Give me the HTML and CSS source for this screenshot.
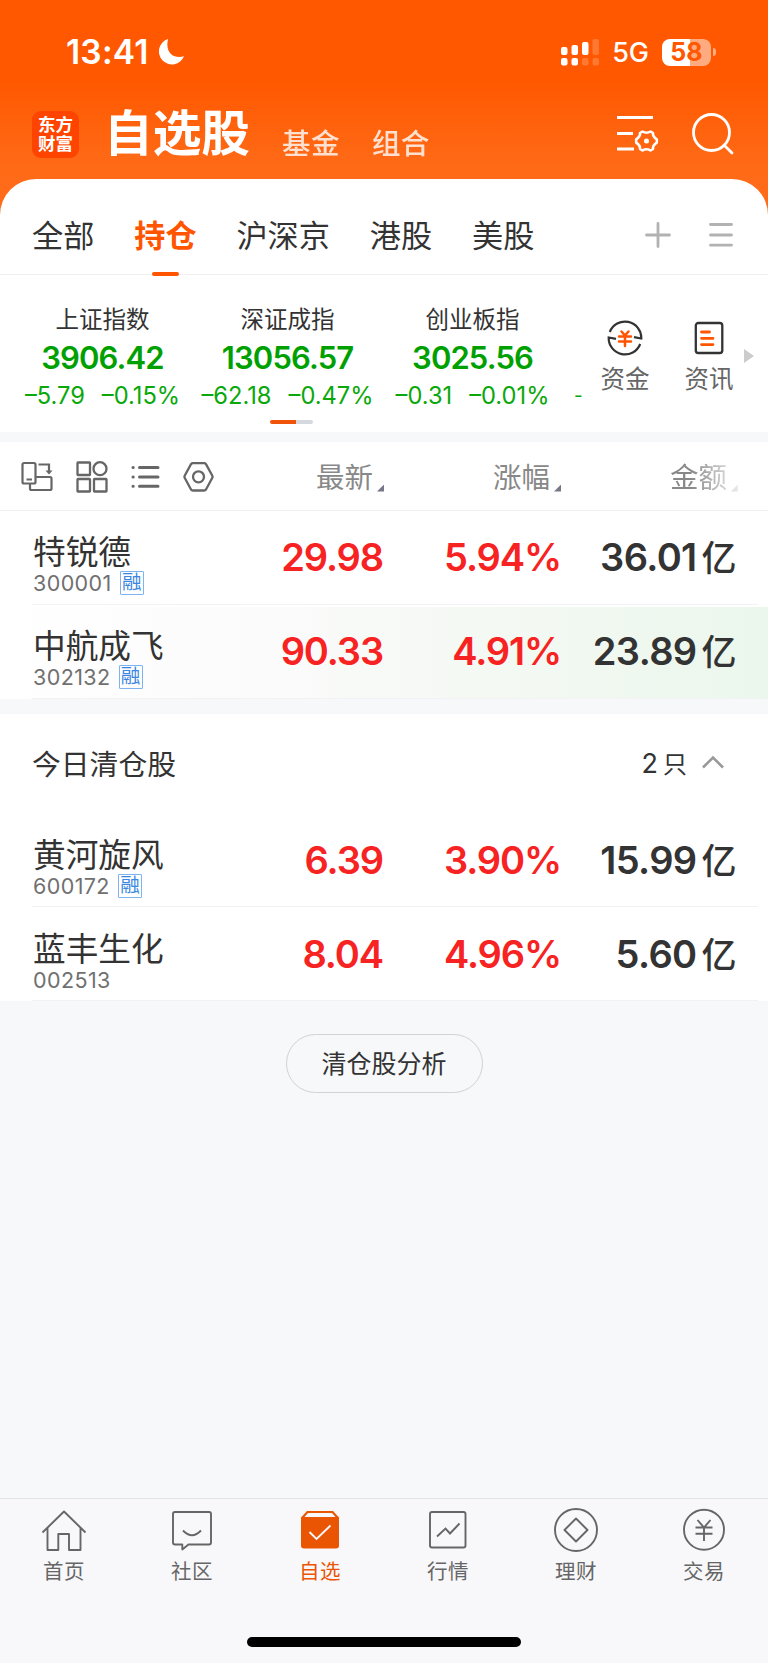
FILE: index.html
```html
<!DOCTYPE html>
<html lang="zh-CN">
<head>
  <meta charset="UTF-8" />
  <meta name="viewport" content="width=device-width, initial-scale=1.0" />
  <title>自选股</title>
  <link rel="stylesheet" href="styles.css">
</head>
<body>
  <div class="top">
    <div class="status">
      <span class="time">13:41</span>
      <svg class="moon" width="26" height="26" viewBox="0 0 26 26"><path d="M10 0A13 13 0 1 0 26 17.2C18 20 6.500 16 10 0Z" fill="#fff"/></svg>
      <div class="status-right">
        <svg width="39" height="28" viewBox="0 0 39 28" fill="#fff">
          <rect x="0" y="9" width="6.500" height="8" rx="2"/>
          <rect x="10.500" y="7" width="6.500" height="10" rx="2"/>
          <rect x="21" y="4" width="6.500" height="13" rx="2"/>
          <rect x="31.500" y="1" width="6.500" height="16" rx="2" opacity=".2"/>
          <rect x="0" y="20" width="6.500" height="7.500" rx="2"/>
          <rect x="10.500" y="20" width="6.500" height="7.500" rx="2"/>
          <rect x="21" y="20" width="6.500" height="7.500" rx="2" opacity=".2"/>
          <rect x="31.500" y="20" width="6.500" height="7.500" rx="2" opacity=".2"/>
        </svg>
        <span class="net">5G</span>
        <span class="battery">58</span>
        <span class="battery-cap"></span>
      </div>
    </div>
    <div class="header">
      <div class="logo"><span>东方</span><span>财富</span></div>
      <h1>自选股</h1>
      <span class="sub">基金</span>
      <span class="sub">组合</span>
      <div class="header-icons">
        <svg width="42" height="38" viewBox="0 0 42 38" fill="none" stroke="#fff" stroke-width="3">
          <path d="M0 2.500H36M0 18.500H16M0 34H17"/>
          <path d="M25.500 16.500Q29.500 19 33.500 16.500L36 18Q35.500 21.500 39.800 24.300V27.700Q35.500 30.500 36 34L33.500 35.500Q29.500 33 25.500 35.500L23 34Q23.500 30.500 19.200 27.700V24.300Q23.500 21.500 23 18Z" stroke-width="2.600" stroke-linejoin="round"/>
          <circle cx="29.500" cy="26" r="2.500" fill="#fff" stroke="none"/>
        </svg>
        <svg width="42" height="42" viewBox="0 0 42 42" fill="none" stroke="#fff" stroke-width="2.800" stroke-linecap="round">
          <circle cx="19.500" cy="19.500" r="18"/>
          <path d="M32 32L40 40"/>
        </svg>
      </div>
    </div>
  </div>

  <div class="card">
    <div class="tabs">
      <span>全部</span>
      <span class="active">持仓</span>
      <span>沪深京</span>
      <span>港股</span>
      <span>美股</span>
      <div class="tab-icons">
        <svg width="26" height="26" viewBox="0 0 26 26" stroke="#b2b2b2" stroke-width="2.800" stroke-linecap="round"><path d="M1.500 13H24.500M13 1.500V24.500"/></svg>
        <svg width="24" height="26" viewBox="0 0 24 26" stroke="#b2b2b2" stroke-width="2.800" stroke-linecap="round"><path d="M1.500 2.500H22.500M1.500 13H22.500M1.500 23.200H22.500"/></svg>
      </div>
    </div>

    <div class="indices">
      <div class="index-scroll">
        <div class="index">
          <div class="index-name">上证指数</div>
          <div class="index-value">3906.42</div>
          <div class="index-change"><span>–5.79</span><span>–0.15%</span></div>
        </div>
        <div class="index">
          <div class="index-name">深证成指</div>
          <div class="index-value">13056.57</div>
          <div class="index-change"><span>–62.18</span><span>–0.47%</span></div>
        </div>
        <div class="index">
          <div class="index-name">创业板指</div>
          <div class="index-value">3025.56</div>
          <div class="index-change"><span>–0.31</span><span>–0.01%</span></div>
        </div>
        <div class="next">-</div>
        <div class="pager"></div>
      </div>
      <div class="shortcut">
        <svg width="36" height="36" viewBox="0 0 36 36" fill="none" stroke="#333" stroke-width="2.200">
          <path d="M2.800 12A16.300 16.300 0 0 1 34.300 18.500L27 17.200"/>
          <path d="M33.200 24A16.300 16.300 0 0 1 1.700 17.500L9 18.800"/>
          <path d="M14.500 11.500L18 15.500L21.500 11.500M12 16.500H24M12 21.500H24M18 16V26" stroke="#ff5500" stroke-width="2.500" stroke-linecap="round"/>
        </svg>
        <span>资金</span>
      </div>
      <div class="shortcut">
        <svg width="30" height="36" viewBox="0 0 30 36" fill="none" stroke="#333" stroke-width="2.300">
          <rect x="1.800" y="3" width="26.500" height="30" rx="2.500"/>
          <path d="M7.500 12H15.500M7.500 18.300H19M7.500 24.600H19" stroke="#ff5500" stroke-width="2.800" stroke-linecap="round"/>
        </svg>
        <span>资讯</span>
      </div>
      <div class="more"></div>
    </div>

    <div class="list-head">
      <div class="tools">
        <svg width="32" height="32" viewBox="0 0 32 32" fill="none" stroke="#666" stroke-width="2.200">
          <rect x="1.500" y="2" width="13" height="20.500" rx="1.500"/>
          <path d="M5.500 18.500H11M17.500 3.500H28V12"/>
          <path d="M24.500 9.500L28 13.500L31.500 9.500Z" fill="#666" stroke="none"/>
          <path d="M9 23V27.500Q9 29 10.500 29H29Q30.500 29 30.500 27.500V17.500Q30.500 16 29 16H15"/>
        </svg>
        <svg width="32" height="32" viewBox="0 0 32 32" fill="none" stroke="#666" stroke-width="2.300">
          <rect x="1.500" y="1.500" width="12.500" height="12.500" rx=".5"/>
          <circle cx="24" cy="7.700" r="6.500"/>
          <rect x="1.500" y="18" width="12.500" height="12.500" rx=".5"/>
          <rect x="18" y="18" width="12.500" height="12.500" rx=".5"/>
        </svg>
        <svg width="29" height="32" viewBox="0 0 29 32" fill="none" stroke="#666" stroke-width="3" stroke-linecap="round">
          <path d="M2 6.500H2.200M2 16H2.200M2 25.300H2.200M8.500 6.500H27M8.500 16H27M8.500 25.300H27"/>
        </svg>
        <svg width="31" height="32" viewBox="0 0 31 32" fill="none" stroke="#666" stroke-width="2.300">
          <path d="M8 3.200Q8.700 2.200 10 2.200H21Q22.300 2.200 23 3.200L29.200 14.500Q29.900 15.800 29.200 17L23 28.500Q22.300 29.500 21 29.500H10Q8.700 29.500 8 28.500L1.800 17Q1.100 15.800 1.800 14.500Z"/>
          <circle cx="15.500" cy="15.800" r="5.500"/>
        </svg>
      </div>
      <div class="sort">最新</div>
      <div class="sort">涨幅</div>
      <div class="sort faded">金额</div>
    </div>

    <div class="row">
      <div class="stock">
        <div class="name">特锐德</div>
        <div class="code">300001<span class="tag">融</span></div>
      </div>
      <div class="num red">29.98</div>
      <div class="num red">5.94%</div>
      <div class="num amount">36.01<span class="unit">亿</span></div>
    </div>
    <div class="row highlight">
      <div class="stock">
        <div class="name">中航成飞</div>
        <div class="code">302132<span class="tag">融</span></div>
      </div>
      <div class="num red">90.33</div>
      <div class="num red">4.91%</div>
      <div class="num amount">23.89<span class="unit">亿</span></div>
    </div>
  </div>

  <div class="sold">
    <div class="sold-head">
      <span>今日清仓股</span>
      <span class="count">2<span class="zhi">只</span></span>
      <svg width="22" height="14" viewBox="0 0 22 14" fill="none" stroke="#999" stroke-width="2.600"><path d="M1 12.500L11 2.500L21 12.500"/></svg>
    </div>
    <div class="row">
      <div class="stock">
        <div class="name">黄河旋风</div>
        <div class="code">600172<span class="tag">融</span></div>
      </div>
      <div class="num red">6.39</div>
      <div class="num red">3.90%</div>
      <div class="num amount">15.99<span class="unit">亿</span></div>
    </div>
    <div class="row">
      <div class="stock">
        <div class="name">蓝丰生化</div>
        <div class="code">002513</div>
      </div>
      <div class="num red">8.04</div>
      <div class="num red">4.96%</div>
      <div class="num amount">5.60<span class="unit">亿</span></div>
    </div>
  </div>

  <button class="analyse">清仓股分析</button>

  <div class="nav">
    <div class="nav-items">
      <div class="nav-item">
        <svg width="46" height="46" viewBox="0 0 46 46" fill="none" stroke="#666" stroke-width="1.900">
          <path d="M1.500 24.500L23 3.500L44.500 24.500M6.500 20V42H17.300V26H28V42H39.500V20" stroke-linejoin="round"/>
        </svg>
        <span>首页</span>
      </div>
      <div class="nav-item">
        <svg width="46" height="46" viewBox="0 0 46 46" fill="none" stroke="#666" stroke-width="1.900">
          <path d="M6 4H40Q42 4 42 6V34.500Q42 36.500 40 36.500H19.500L13.300 41.500V36.500H6Q4 36.500 4 34.500V6Q4 4 6 4Z" stroke-linejoin="round"/>
          <path d="M14 22.500Q23 32 32 22.500"/>
        </svg>
        <span>社区</span>
      </div>
      <div class="nav-item active">
        <svg width="46" height="46" viewBox="0 0 46 46" fill="none">
          <path d="M10 3H36L42 9.500V37.500Q42 40.500 39 40.500H7Q4 40.500 4 37.500V9.500Z" fill="#ea5504"/>
          <path d="M11 5H35L38.500 9H7.500Z" fill="#f8f8fb"/>
          <path d="M12.500 24L19.500 31L33.500 17.500" stroke="#f8f8fb" stroke-width="1.900"/>
        </svg>
        <span>自选</span>
      </div>
      <div class="nav-item">
        <svg width="46" height="46" viewBox="0 0 46 46" fill="none" stroke="#666" stroke-width="1.900">
          <rect x="5" y="4" width="35.500" height="35.500" rx="2"/>
          <path d="M12 28.500L20.500 20.500L25 25.500L34.500 15.500"/>
        </svg>
        <span>行情</span>
      </div>
      <div class="nav-item">
        <svg width="46" height="46" viewBox="0 0 46 46" fill="none" stroke="#666" stroke-width="1.900">
          <circle cx="23" cy="22" r="21"/>
          <path d="M23 10.500L34.500 22L23 33.500L11.500 22Z" stroke-linejoin="round"/>
        </svg>
        <span>理财</span>
      </div>
      <div class="nav-item">
        <svg width="46" height="46" viewBox="0 0 46 46" fill="none" stroke="#666" stroke-width="1.900">
          <circle cx="23" cy="21.800" r="20"/>
          <path d="M16.500 12L23 19.500L29.500 12M14.500 19.500H31.500M14.500 25.800H31.500M23 19.500V33"/>
        </svg>
        <span>交易</span>
      </div>
    </div>
    <div class="home-bar"></div>
  </div>
</body>
</html>
```
FILE: styles.css
```css
* {
  box-sizing: border-box;
}
body {
  margin: 0;
  height: 1663px;
  display: flex;
  flex-direction: column;
  background-color: #f7f8fa;
  color: #333;
  font-family: Inter, "Noto Sans CJK SC", sans-serif;
}
svg {
  display: block;
  flex-shrink: 0;
}
.top {
  height: 219px;
  background: linear-gradient(#ff5800 0, #ff5800 80px, #ff6a17 165px, #ff6c1a 219px);
  color: white;
}
.status {
  height: 104px;
  padding: 0 60px 0 66px;
  display: flex;
  align-items: center;
}
.time {
  font-size: 33.500px;
  font-weight: 600;
  letter-spacing: 0.2px;
}
.moon {
  margin-left: 9px;
}
.status-right {
  margin-left: auto;
  margin-right: -8px;
  display: flex;
  align-items: center;
}
.net {
  margin-left: 12px;
  font-size: 27px;
  font-weight: 500;
}
.battery {
  margin-left: 13px;
  width: 49px;
  height: 27px;
  border-radius: 8px;
  background: linear-gradient(90deg, white 28px, #ffab80 28px);
  color: #ff5800;
  font-size: 25px;
  font-weight: 700;
  line-height: 27px;
  text-align: center;
}
.battery-cap {
  width: 3px;
  height: 8px;
  margin-left: 2px;
  border-radius: 0 4px 4px 0;
  background-color: #ffab80;
}
.header {
  height: 75px;
  padding: 0 34px 0 32px;
  display: flex;
  align-items: center;
}
.logo {
  width: 47px;
  height: 47px;
  margin-top: -14px;
  padding-top: 4px;
  border-radius: 9px;
  background-color: #ff4400;
  font-size: 17.500px;
  font-weight: 700;
  line-height: 19px;
  text-align: center;
}
.logo span {
  display: block;
}
h1 {
  margin: -15px 16px 0 25px;
  font-size: 48.700px;
  font-weight: 700;
  line-height: 60px;
}
.sub {
  margin: 4px 16px 0;
  font-size: 28.500px;
  font-weight: 500;
  line-height: 40px;
  letter-spacing: 0.4px;
  opacity: 0.8;
}
.header-icons {
  margin: -15px 0 0 auto;
  display: flex;
  align-items: center;
  gap: 33px;
}
.card {
  margin-top: -40px;
  border-radius: 36px 36px 0 0;
  background-color: white;
}
.tabs {
  height: 96px;
  padding: 0 35px 0 32px;
  border-bottom: 1px solid #eee;
  display: flex;
  align-items: center;
  gap: 39.800px;
  font-size: 31.200px;
}
.tabs > span {
  position: relative;
  line-height: 96px;
  margin-top: 18px;
}
.tabs .active {
  color: #ff5500;
  font-weight: 700;
}
.tabs .active::after {
  content: "";
  position: absolute;
  left: 50%;
  bottom: 8px;
  width: 27px;
  height: 4px;
  margin-left: -13px;
  border-radius: 2px;
  background-color: #ff5500;
}
.tab-icons {
  margin: 16px 0 0 auto;
  display: flex;
  gap: 38px;
}
.indices {
  height: 157px;
  display: flex;
}
.index-scroll {
  position: relative;
  width: 583px;
  padding: 29px 0 0 10px;
  display: flex;
  overflow: hidden;
}
.index {
  width: 185px;
  flex-shrink: 0;
  text-align: center;
}
.index-name {
  font-size: 23.500px;
  line-height: 31px;
}
.index-value {
  color: #00a000;
  font-size: 31px;
  font-weight: 600;
  line-height: 45px;
  letter-spacing: -0.9px;
}
.index-change {
  display: flex;
  justify-content: center;
  gap: 17px;
  color: #0aa80a;
  font-size: 23.700px;
  line-height: 31px;
}
.next {
  padding: 76px 0 0 9px;
  color: #0aa80a;
  font-size: 19px;
  line-height: 32px;
}
.pager {
  position: absolute;
  left: 270px;
  bottom: 8px;
  width: 43px;
  height: 4px;
  border-radius: 2px;
  background: linear-gradient(90deg, #f0540a 26px, #d5d9df 26px);
}
.shortcut {
  width: 84px;
  padding-top: 45px;
  display: flex;
  flex-direction: column;
  align-items: center;
  gap: 5px;
  color: #666;
  font-size: 24.500px;
  line-height: 36px;
}
.more {
  margin: 74px 0 0 -7px;
  width: 10px;
  height: 14px;
  background-color: #ccc;
  clip-path: polygon(0 0, 100% 50%, 0 100%);
}
.list-head {
  height: 79px;
  padding: 3px 30px 0 21px;
  border-top: 10px solid #f7f8fa;
  border-bottom: 1px solid #eee;
  display: grid;
  grid-template-columns: 193px 170px 177px 177px;
  align-items: center;
}
.tools {
  display: flex;
  gap: 23px;
  margin-top: -2px;
}
.sort {
  display: flex;
  justify-content: flex-end;
  color: #888;
  font-size: 28.500px;
  line-height: 40px;
}
.sort::after {
  content: "";
  align-self: flex-end;
  width: 7px;
  height: 7px;
  margin: 0 0 6px 4px;
  background-color: #778;
  clip-path: polygon(100% 0, 100% 100%, 0 100%);
}
.faded {
  -webkit-mask-image: linear-gradient(90deg, #000 130px, rgba(0, 0, 0, 0.15) 177px);
  mask-image: linear-gradient(90deg, #000 130px, rgba(0, 0, 0, 0.15) 177px);
}
.row {
  position: relative;
  height: 94px;
  padding: 0 32px 0 33px;
  display: grid;
  grid-template-columns: 180px 170px 178px 175px;
  align-items: center;
}
.row::after {
  content: "";
  position: absolute;
  left: 32px;
  right: 10px;
  bottom: 0;
  height: 1px;
  background-color: #f2f2f4;
}
.highlight {
  background: linear-gradient(90deg, #fff, #fbfbfb 35%, #f6f9f5 55%, #ebf7ec);
  box-shadow: inset 0 2px white;
}
.stock {
  padding-top: 13px;
}
.name {
  font-size: 32.700px;
  line-height: 36px;
  white-space: nowrap;
}
.code {
  display: flex;
  align-items: center;
  color: #707070;
  font-size: 21.500px;
  letter-spacing: 0.4px;
  line-height: 26px;
}
.tag {
  width: 24px;
  height: 24px;
  margin-left: 8px;
  border: 1px solid #7db3ef;
  border-radius: 1px;
  color: #3a86e0;
  font-size: 19.500px;
  letter-spacing: 0;
  line-height: 20px;
  text-align: center;
}
.num {
  font-size: 38px;
  font-weight: 600;
  letter-spacing: -1.1px;
  line-height: 46px;
  height: 46px;
  margin-top: -3px;
  text-align: right;
  white-space: nowrap;
}
.red {
  color: #f72323;
}
.amount {
  letter-spacing: -0.6px;
}
.unit {
  margin-left: 5px;
  font-size: 35px;
  font-weight: 500;
  line-height: 1;
}
.sold {
  margin-top: 15px;
  background-color: white;
}
.sold .row {
  padding-top: 2px;
}
.sold-head {
  height: 99px;
  padding: 0 44px 3px 32px;
  display: flex;
  align-items: center;
  font-size: 28.800px;
}
.count {
  margin-left: auto;
  margin-right: 15px;
  font-size: 27px;
}
.zhi {
  margin-left: 5px;
  font-size: 24px;
}
.analyse {
  align-self: center;
  width: 197px;
  height: 59px;
  margin-top: 33px;
  padding: 0 0 4px;
  border: 1px solid #d0d2d5;
  border-radius: 30px;
  background: none;
  color: #333;
  font-family: inherit;
  font-size: 25px;
}
.nav {
  height: 165px;
  margin-top: auto;
  border-top: 1px solid #e2e2e5;
  background-color: #f8f8fb;
}
.nav-items {
  height: 138px;
  padding-top: 9px;
  display: grid;
  grid-template-columns: repeat(6, 1fr);
}
.nav-item {
  display: flex;
  flex-direction: column;
  align-items: center;
  color: #666;
  font-size: 20.500px;
  letter-spacing: 0.6px;
  line-height: 36px;
}
.nav-item.active {
  color: #ea5504;
}
.home-bar {
  width: 274px;
  height: 10px;
  margin: 0 auto;
  border-radius: 5px;
  background-color: black;
}
```
